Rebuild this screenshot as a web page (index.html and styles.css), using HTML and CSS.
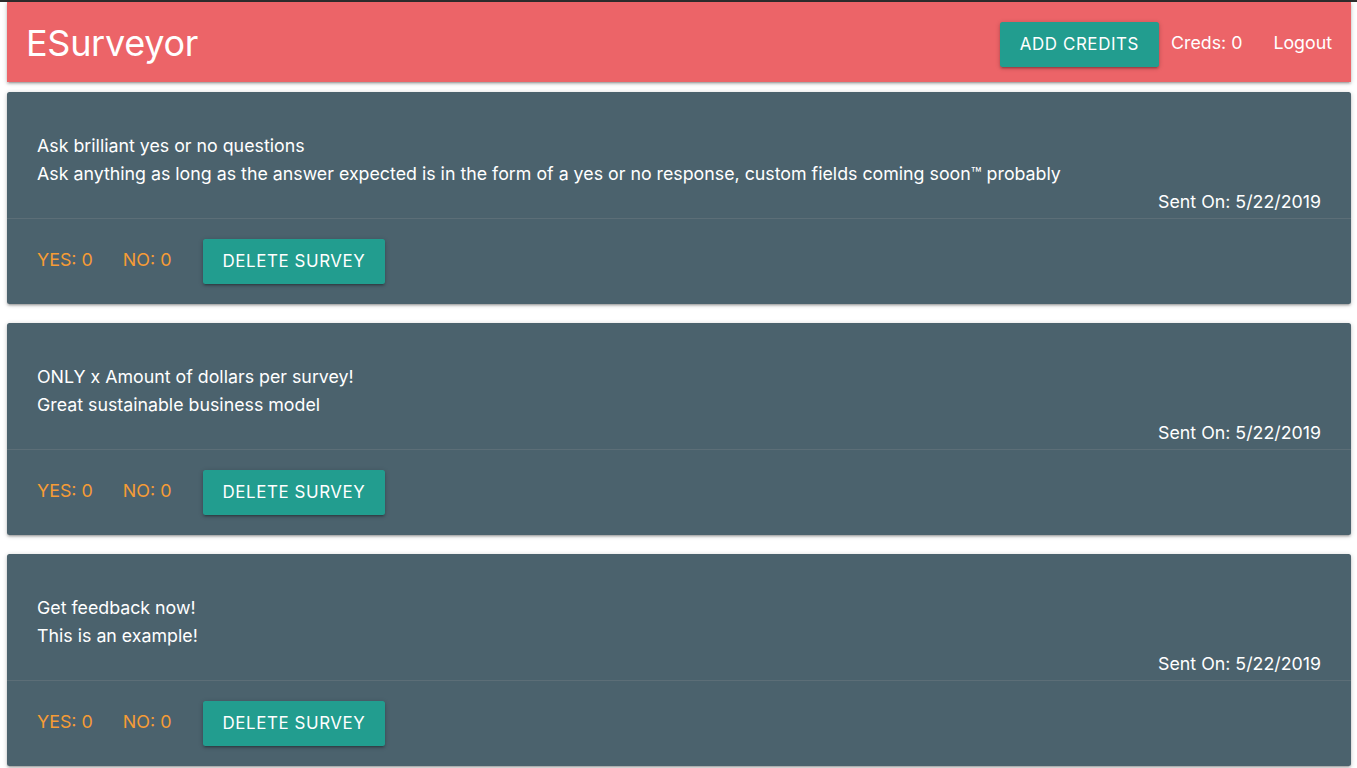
FILE: index.html
```html
<!DOCTYPE html>
<html>
<head>
<meta charset="utf-8">
<link rel="stylesheet" href="styles.css">
</head>
<body>
<div class="topstrip"></div>
<div class="page">
  <nav class="nav">
    <a class="brand" href="#">ESurveyor</a>
    <ul class="nav-links">
      <li><a class="btn" href="#">Add Credits</a></li>
      <li class="creds">Creds: 0</li>
      <li><a class="logout" href="#">Logout</a></li>
    </ul>
  </nav>

  <div class="card">
    <div class="card-content">
      <p>Ask brilliant yes or no questions</p>
      <p>Ask anything as long as the answer expected is in the form of a yes or no response, custom fields coming soon™ probably</p>
      <p class="sent">Sent On: 5/22/2019</p>
    </div>
    <div class="card-action">
      <a href="#" class="count">Yes: 0</a>
      <a href="#" class="count">No: 0</a>
      <a href="#" class="btn">Delete Survey</a>
    </div>
  </div>

  <div class="card">
    <div class="card-content">
      <p>ONLY x Amount of dollars per survey!</p>
      <p>Great sustainable business model</p>
      <p class="sent">Sent On: 5/22/2019</p>
    </div>
    <div class="card-action">
      <a href="#" class="count">Yes: 0</a>
      <a href="#" class="count">No: 0</a>
      <a href="#" class="btn">Delete Survey</a>
    </div>
  </div>

  <div class="card">
    <div class="card-content">
      <p>Get feedback now!</p>
      <p>This is an example!</p>
      <p class="sent">Sent On: 5/22/2019</p>
    </div>
    <div class="card-action">
      <a href="#" class="count">Yes: 0</a>
      <a href="#" class="count">No: 0</a>
      <a href="#" class="btn">Delete Survey</a>
    </div>
  </div>
</div>
</body>
</html>
```

FILE: styles.css
```css
* { box-sizing: border-box; }
html, body { margin: 0; padding: 0; }
body {
  background: #ffffff;
  font-family: Inter, "Open Sans", Roboto, sans-serif;
  font-size: 17.8px;
  line-height: 1.5;
  color: #ffffff;
  overflow: hidden;
  height: 768px;
}
a { text-decoration: none; color: inherit; }
p { margin: 0; }

.topstrip { height: 2px; background: #2e2e2e; }

.page { margin: 0 6px 0 7px; }

.nav {
  height: 80px;
  background: #ec6468;
  display: flex;
  align-items: center;
  justify-content: space-between;
  box-shadow: 0 2px 2px 0 rgba(0,0,0,0.14), 0 3px 1px -2px rgba(0,0,0,0.12), 0 1px 5px 0 rgba(0,0,0,0.2);
  position: relative;
  z-index: 1;
}
.brand {
  font-size: 36px;
  color: #fff;
  padding-left: 19px;
  line-height: 80px;
  letter-spacing: -0.3px;
  margin-top: 2px;
}
.nav-links {
  list-style: none;
  margin: 0;
  padding: 0;
  display: flex;
  align-items: center;
  height: 100%;
}
.creds { padding: 0 12px; margin-top: 2px; }
.logout { padding: 0 19px; display: block; margin-top: 2px; }

.btn {
  display: inline-block;
  background: #229d8f;
  color: #fff;
  height: 45px;
  line-height: 45px;
  padding: 0 20px;
  border-radius: 2.5px;
  text-transform: uppercase;
  letter-spacing: 0.6px;
  font-size: 16.9px;
  box-shadow: 0 2px 2px 0 rgba(0,0,0,0.14), 0 3px 1px -2px rgba(0,0,0,0.12), 0 1px 5px 0 rgba(0,0,0,0.2);
}
.nav .btn { margin-top: 4px; }

.card {
  background: #4b626d;
  border-radius: 2.5px;
  margin: 10px 0 19px;
  box-shadow: 0 2px 2px 0 rgba(0,0,0,0.14), 0 3px 1px -2px rgba(0,0,0,0.12), 0 1px 5px 0 rgba(0,0,0,0.2);
}
.card-content {
  padding: 40px 30px 2px;
  line-height: 28px;
}
.sent { text-align: right; }
.card-action {
  border-top: 1px solid rgba(160,160,160,0.2);
  padding: 20px 30px;
  display: flex;
  align-items: center;
  height: 86px;
}
.count {
  color: #f69c35;
  text-transform: uppercase;
  margin-right: 30px;
  font-size: 17.9px;
  margin-top: -2px;
}
.card-action .btn { margin-left: 1px; }
```
